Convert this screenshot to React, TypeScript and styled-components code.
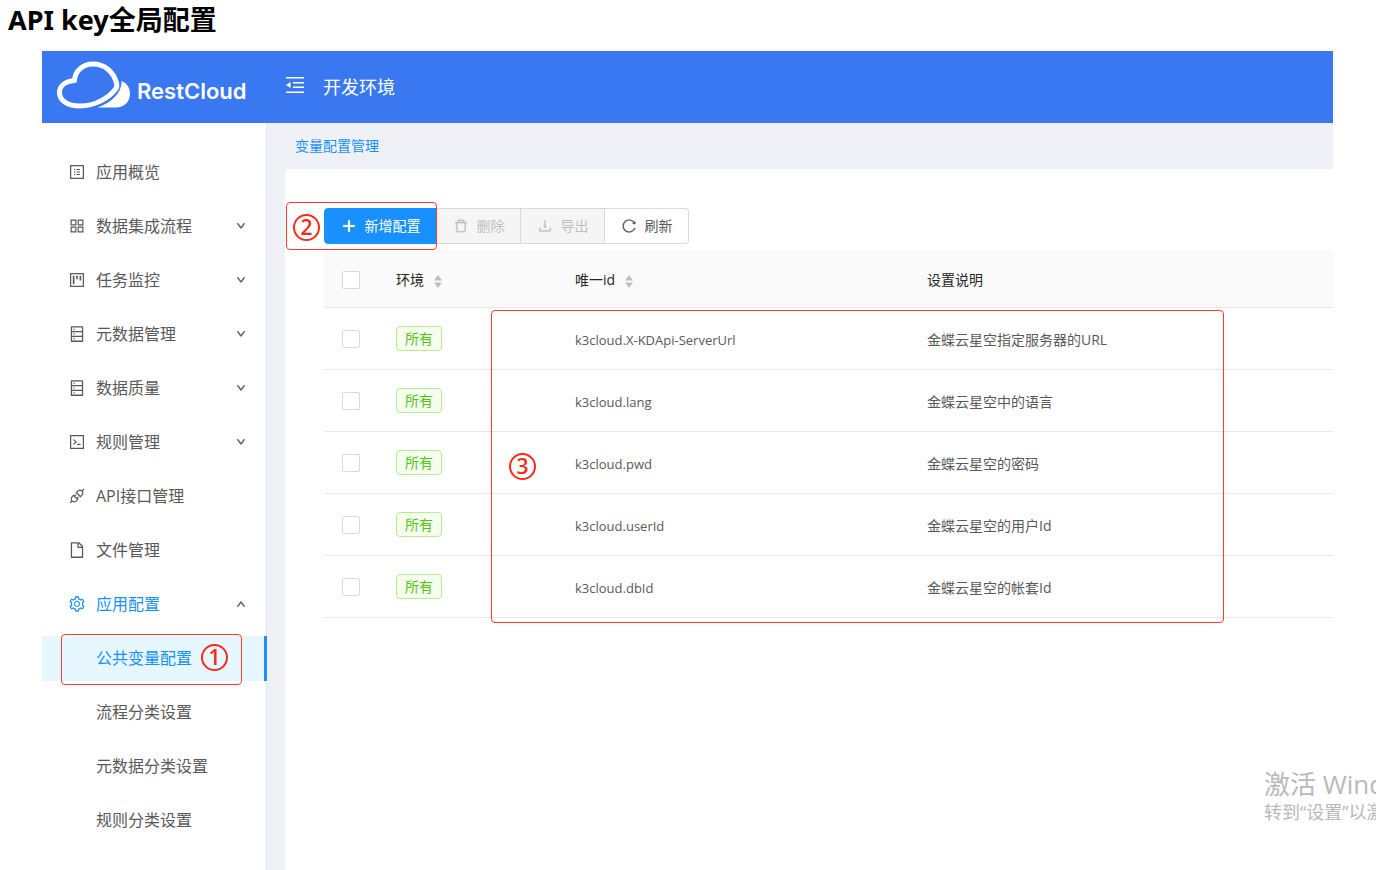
import React from 'react';
import styled, { createGlobalStyle, css } from 'styled-components';
import {
  AiOutlineApi,
  AiOutlineAppstore,
  AiOutlineCode,
  AiOutlineDatabase,
  AiOutlineDelete,
  AiOutlineDown,
  AiOutlineDownload,
  AiOutlineFile,
  AiOutlinePlus,
  AiOutlineProfile,
  AiOutlineProject,
  AiOutlineReload,
  AiOutlineSetting,
  AiOutlineUp,
} from 'react-icons/ai';

const GlobalStyle = createGlobalStyle`
  *, *::before, *::after { box-sizing: border-box; }
  body {
    margin: 0;
    background: #fff;
    color: #595959;
    font-family: "Open Sans", "Noto Sans CJK SC", sans-serif;
    font-size: 14px;
    line-height: 20px;
  }
  button, input { font: inherit; margin: 0; }
`;

const Page = styled.main`
  position: relative;
  display: flex;
  flex-direction: column;
  min-height: 100vh;
  overflow: hidden;
`;

const Title = styled.h1`
  margin: 0;
  padding: 0 8px 11px;
  color: #000;
  font-family: "Noto Sans", "Noto Sans CJK SC", sans-serif;
  font-size: 27px;
  font-weight: 700;
  line-height: 40px;
`;

const Frame = styled.section`
  display: flex;
  flex: 1;
  flex-direction: column;
  margin: 0 43px 0 42px;
`;

const Header = styled.header`
  display: flex;
  height: 72px;
  background: #3a78f1;
  color: #fff;
`;

const Brand = styled.a`
  display: flex;
  align-items: center;
  gap: 5px;
  width: 225px;
  padding: 0 0 4px 14px;
  color: inherit;
  text-decoration: none;
`;

const BrandName = styled.span`
  padding-top: 12px;
  font-family: Inter, sans-serif;
  font-size: 22px;
  font-weight: 600;
  line-height: 26px;
`;

const HeaderBar = styled.div`
  display: flex;
  align-items: center;
  gap: 19px;
  padding-left: 19px;
  font-size: 18px;
`;

const FoldButton = styled.button`
  display: flex;
  padding: 0 0 4px;
  border: 0;
  background: none;
  color: inherit;
`;

const Body = styled.div`
  display: flex;
  flex: 1;
`;

const Sidebar = styled.nav`
  flex: 0 0 225px;
  padding: 27px 0 18px;
  border-right: 1px solid #e6e7ec;
`;

const Menu = styled.ul`
  display: flex;
  flex-direction: column;
  gap: 9px;
  margin: 0;
  padding: 0;
  list-style: none;
`;

const MenuItem = styled.li`
  position: relative;
`;

const MenuLink = styled.a<{ $active?: boolean; $selected?: boolean }>`
  display: flex;
  align-items: center;
  gap: 10px;
  height: 45px;
  padding: 0 20px 2px 26px;
  color: ${(p) => (p.$active ? '#1890ff' : '#595959')};
  font-size: 16px;
  text-decoration: none;
  ${(p) =>
    p.$selected &&
    css`
      margin-right: -1px;
      border-right: 3px solid #1890ff;
      background: #e6f7ff;
    `}
`;

const MenuIcon = styled.span`
  display: flex;
  width: 18px;
  font-size: 18px;
`;

const MenuArrow = styled.span`
  display: flex;
  margin-left: auto;
  color: #595959;
  font-size: 10px;

  svg { stroke-width: 80px; }
`;

const Content = styled.div`
  display: flex;
  flex: 1;
  flex-direction: column;
  min-width: 0;
  padding-left: 18px;
  background: #eff1f6;
`;

const Crumb = styled.div`
  height: 46px;
  padding: 13px 10px;
`;

const CrumbLink = styled.a`
  color: #1890ff;
  text-decoration: none;
`;

const Card = styled.div`
  flex: 1;
  padding: 39px 0 0 39px;
  border-top-left-radius: 5px;
  background: #fff;
`;

const Toolbar = styled.div`
  position: relative;
  display: flex;
  padding-bottom: 6px;
`;

const ToolButton = styled.button<{ $primary?: boolean }>`
  display: flex;
  align-items: center;
  justify-content: center;
  gap: 8px;
  width: ${(p) => (p.$primary ? 113 : 84)}px;
  height: 36px;
  padding: 0;
  border: 1px solid ${(p) => (p.$primary ? '#1890ff' : '#d9d9d9')};
  border-left-width: ${(p) => (p.$primary ? 1 : 0)}px;
  background: ${(p) => (p.$primary ? '#1890ff' : '#fff')};
  color: ${(p) => (p.$primary ? '#fff' : '#595959')};
  white-space: nowrap;

  &:first-child { border-radius: 4px 0 0 4px; }
  &:nth-child(4) { border-radius: 0 4px 4px 0; }
  &:disabled { background: #f5f5f5; color: #bfbfbf; }
  svg {
    font-size: 16px;
    stroke-width: ${(p) => (p.$primary ? 60 : 15)}px;
  }
`;

const TableArea = styled.div`
  position: relative;
`;

const Table = styled.table`
  width: 100%;
  border-collapse: separate;
  border-spacing: 0;
  table-layout: fixed;
`;

const HeadCell = styled.th<{ $width?: number }>`
  width: ${(p) => (p.$width ? `${p.$width}px` : 'auto')};
  height: 58px;
  padding: 2px 18px 0;
  border-bottom: 1px solid #e8e8e8;
  background: #fafafa;
  color: #262626;
  font-weight: 400;
  text-align: left;
`;

const Cell = styled.td`
  height: 62px;
  padding: 0 18px;
  border-bottom: 1px solid #e8e8e8;
`;

const TextCell = styled(Cell)`
  padding-top: 2px;
`;

const KeyCell = styled(TextCell)`
  font-size: 13px;
`;

const HeadLabel = styled.span`
  display: flex;
  align-items: center;
  gap: 10px;

  svg { margin-top: 3px; }
`;

const Checkbox = styled.input`
  display: block;
  width: 18px;
  height: 18px;
  border: 1px solid #d9d9d9;
  border-radius: 2px;
  background: #fff;
  appearance: none;
`;

const Tag = styled.span`
  display: inline-block;
  height: 25px;
  padding: 0 8px;
  border: 1px solid #b7eb8f;
  border-radius: 4px;
  background: #f6ffed;
  color: #52c41a;
  line-height: 23px;
  white-space: nowrap;
`;

const Outline = styled.div<{ $x: number; $y: number; $w: number; $h: number }>`
  position: absolute;
  top: ${(p) => p.$y}px;
  left: ${(p) => p.$x}px;
  width: ${(p) => p.$w}px;
  height: ${(p) => p.$h}px;
  border: 1px solid #fb3b30;
  border-radius: 4px;
  pointer-events: none;
`;

const Step = styled.span<{ $x: number; $y: number }>`
  position: absolute;
  top: ${(p) => p.$y}px;
  left: ${(p) => p.$x}px;
  width: 27px;
  height: 27px;
  border: 2px solid #f9291c;
  border-radius: 50%;
  color: #f9291c;
  font-size: 21px;
  font-weight: 600;
  line-height: 23px;
  text-align: center;
`;

const Watermark = styled.aside`
  position: absolute;
  top: 768px;
  right: 0;
  width: 112px;
  overflow: hidden;
  color: #b9b9b9;
  font-size: 18px;
  line-height: 24px;
  white-space: nowrap;
`;

const WatermarkTitle = styled.div`
  font-size: 26px;
  line-height: 32px;
`;

const LogoMark = () => (
  <svg width="76" height="50" viewBox="0 0 76 50" aria-hidden="true">
    <path
      d="M18.500 20.500C9 21.500 3.500 26 3.500 32.500C3.500 41 12 46 24 46C39 46 53 38 59.500 29C61 27 61.300 25.500 60.500 23C57.500 11.500 48.500 4 37 4C27 4 19 11 18.500 20.500Z"
      fill="none"
      stroke="#fff"
      strokeWidth="5"
      strokeLinejoin="round"
    />
    <path d="M65.500 21C71 23 74 28 74 33.500C74 42 68 47.500 60 47.500H41C53 44 66 34 65.500 21Z" fill="#fff" />
  </svg>
);

const FoldIcon = () => (
  <svg width="18" height="18" viewBox="0 0 18 18" fill="#fff" aria-hidden="true">
    <path d="M0 1h18v1.500H0zM7 6h11v1.500H7zM7 10.500h11V12H7zM0 15.500h18V17H0zM0 9l4.500-3v6z" />
  </svg>
);

const SortIcon = () => (
  <svg width="8" height="13" viewBox="0 0 8 13" fill="#bfbfbf" aria-hidden="true">
    <path d="M4 0l4 5.500H0zM4 13l4-5.500H0z" />
  </svg>
);

type Entry = {
  label: string;
  icon?: React.ReactNode;
  arrow?: 'down' | 'up';
  active?: boolean;
  selected?: boolean;
};

const entries: Entry[] = [
  { label: '应用概览', icon: <AiOutlineProfile /> },
  { label: '数据集成流程', icon: <AiOutlineAppstore />, arrow: 'down' },
  { label: '任务监控', icon: <AiOutlineProject />, arrow: 'down' },
  { label: '元数据管理', icon: <AiOutlineDatabase />, arrow: 'down' },
  { label: '数据质量', icon: <AiOutlineDatabase />, arrow: 'down' },
  { label: '规则管理', icon: <AiOutlineCode />, arrow: 'down' },
  { label: 'API接口管理', icon: <AiOutlineApi /> },
  { label: '文件管理', icon: <AiOutlineFile /> },
  { label: '应用配置', icon: <AiOutlineSetting />, arrow: 'up', active: true },
  { label: '公共变量配置', active: true, selected: true },
  { label: '流程分类设置' },
  { label: '元数据分类设置' },
  { label: '规则分类设置' },
];

const rows = [
  { id: 'k3cloud.X-KDApi-ServerUrl', note: '金蝶云星空指定服务器的URL' },
  { id: 'k3cloud.lang', note: '金蝶云星空中的语言' },
  { id: 'k3cloud.pwd', note: '金蝶云星空的密码' },
  { id: 'k3cloud.userId', note: '金蝶云星空的用户Id' },
  { id: 'k3cloud.dbId', note: '金蝶云星空的帐套Id' },
];

export default function App() {
  return (
    <>
      <GlobalStyle />
      <Page lang="zh-CN">
        <Title>API key全局配置</Title>
        <Frame>
          <Header>
            <Brand href="#home">
              <LogoMark />
              <BrandName>RestCloud</BrandName>
            </Brand>
            <HeaderBar>
              <FoldButton type="button" aria-label="收起菜单">
                <FoldIcon />
              </FoldButton>
              <span>开发环境</span>
            </HeaderBar>
          </Header>
          <Body>
            <Sidebar>
              <Menu>
                {entries.map((entry) => (
                  <MenuItem key={entry.label}>
                    <MenuLink href="#menu" $active={entry.active} $selected={entry.selected}>
                      <MenuIcon>{entry.icon}</MenuIcon>
                      {entry.label}
                      {entry.arrow && (
                        <MenuArrow>{entry.arrow === 'up' ? <AiOutlineUp /> : <AiOutlineDown />}</MenuArrow>
                      )}
                    </MenuLink>
                    {entry.selected && (
                      <>
                        <Outline $x={19} $y={-2} $w={181} $h={51} />
                        <Step $x={159} $y={8}>1</Step>
                      </>
                    )}
                  </MenuItem>
                ))}
              </Menu>
            </Sidebar>
            <Content>
              <Crumb>
                <CrumbLink href="#variables">变量配置管理</CrumbLink>
              </Crumb>
              <Card>
                <Toolbar>
                  <ToolButton type="button" $primary>
                    <AiOutlinePlus />
                    新增配置
                  </ToolButton>
                  <ToolButton type="button" disabled>
                    <AiOutlineDelete />
                    删除
                  </ToolButton>
                  <ToolButton type="button" disabled>
                    <AiOutlineDownload />
                    导出
                  </ToolButton>
                  <ToolButton type="button">
                    <AiOutlineReload />
                    刷新
                  </ToolButton>
                  <Outline $x={-38} $y={-6} $w={151} $h={48} />
                  <Step $x={-31} $y={6}>2</Step>
                </Toolbar>
                <TableArea>
                  <Table>
                    <thead>
                      <tr>
                        <HeadCell $width={54}>
                          <Checkbox type="checkbox" aria-label="全选" />
                        </HeadCell>
                        <HeadCell $width={179}>
                          <HeadLabel>环境<SortIcon /></HeadLabel>
                        </HeadCell>
                        <HeadCell $width={352}>
                          <HeadLabel>唯一id<SortIcon /></HeadLabel>
                        </HeadCell>
                        <HeadCell>设置说明</HeadCell>
                      </tr>
                    </thead>
                    <tbody>
                      {rows.map((row) => (
                        <tr key={row.id}>
                          <Cell>
                            <Checkbox type="checkbox" aria-label={row.id} />
                          </Cell>
                          <Cell>
                            <Tag>所有</Tag>
                          </Cell>
                          <KeyCell>{row.id}</KeyCell>
                          <TextCell>{row.note}</TextCell>
                        </tr>
                      ))}
                    </tbody>
                  </Table>
                  <Outline $x={167} $y={60} $w={733} $h={313} />
                  <Step $x={185} $y={203}>3</Step>
                </TableArea>
              </Card>
            </Content>
          </Body>
        </Frame>
        <Watermark>
          <WatermarkTitle>激活 Windows</WatermarkTitle>
          转到“设置”以激活 Windows。
        </Watermark>
      </Page>
    </>
  );
}
